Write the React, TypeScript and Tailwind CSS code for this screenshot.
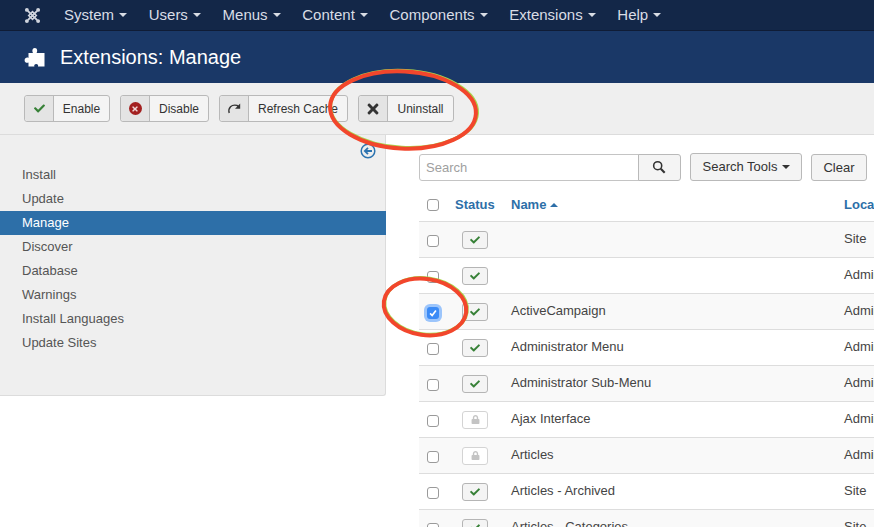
import React from 'react';
import { FaCheck, FaLock, FaTimes } from 'react-icons/fa';

const menus = ['System', 'Users', 'Menus', 'Content', 'Components', 'Extensions', 'Help'];
const sideLinks = ['Install', 'Update', 'Manage', 'Discover', 'Database', 'Warnings', 'Install Languages', 'Update Sites'];

const rows = [
  { name: '', loc: 'Site', status: 'ok' },
  { name: '', loc: 'Administrator', status: 'ok' },
  { name: 'ActiveCampaign', loc: 'Administrator', status: 'ok', checked: true },
  { name: 'Administrator Menu', loc: 'Administrator', status: 'ok' },
  { name: 'Administrator Sub-Menu', loc: 'Administrator', status: 'ok' },
  { name: 'Ajax Interface', loc: 'Administrator', status: 'lock' },
  { name: 'Articles', loc: 'Administrator', status: 'lock' },
  { name: 'Articles - Archived', loc: 'Site', status: 'ok' },
  { name: 'Articles - Categories', loc: 'Site', status: 'ok' },
];

const Caret = () => (
  <span className="ml-[5px] inline-block w-0 h-0 border-x-[4px] border-x-transparent border-t-[4px] border-t-current align-middle" />
);

const JoomlaLogo = () => (
  <svg viewBox="0 0 20 20" className="w-[17px] h-[17px]" fill="none" stroke="#cfd4dd">
    <path d="M4.5 4.5 L15.5 15.5 M15.5 4.5 L4.5 15.5" strokeWidth="2.2" />
    <path d="M5.5 10 L10 5.5 L14.5 10 L10 14.5 Z" strokeWidth="1.8" />
    <circle cx="3.4" cy="3.4" r="2.3" fill="#cfd4dd" stroke="none" />
    <circle cx="16.6" cy="3.4" r="2.3" fill="#cfd4dd" stroke="none" />
    <circle cx="3.4" cy="16.6" r="2.3" fill="#cfd4dd" stroke="none" />
    <circle cx="16.6" cy="16.6" r="2.3" fill="#cfd4dd" stroke="none" />
  </svg>
);

const PuzzleIcon = () => (
  <svg viewBox="0 0 22 20" className="w-[22px] h-[20px]" fill="#ffffff">
    <path d="M4.5 6 H9 C8 4.5 8 1 10.8 1 C13.6 1 13.6 4.5 12.6 6 H20.5 V19.5 H14 C14.6 18 13.6 17 12.2 17 C10.8 17 9.8 18 10.4 19.5 H4.5 V15.5 C3 16.3 0.6 15.5 0.6 13.2 C0.6 10.9 3 10.1 4.5 10.9 Z" />
  </svg>
);

const ToolButton = ({ icon, label, width }: { icon: React.ReactNode; label: string; width: string }) => (
  <button className={`flex h-[27px] items-center rounded-[3px] border border-[#b9b9b9] bg-[#f4f4f4] text-[12px] text-[#333] ${width}`}>
    <span className="flex h-full w-[29px] shrink-0 items-center justify-center rounded-l-[3px] border-r border-[#b9b9b9] bg-[#e4e4e4]">
      {icon}
    </span>
    <span className="flex-1 text-center whitespace-nowrap">{label}</span>
  </button>
);

const CheckBox = ({ checked }: { checked?: boolean }) =>
  checked ? (
    <span className="flex h-[12px] w-[12px] items-center justify-center rounded-[3px] bg-[#3b8bf6] shadow-[0_0_0_3px_#9cc5fb]">
      <svg viewBox="0 0 12 12" className="h-[10px] w-[10px]" fill="none" stroke="#fff" strokeWidth="2">
        <path d="M2.5 6.5 L5 9 L9.5 3" />
      </svg>
    </span>
  ) : (
    <span className="block h-[12px] w-[12px] rounded-[3px] border border-[#9a9a9a] bg-white" />
  );

const StatusButton = ({ status }: { status: string }) =>
  status === 'ok' ? (
    <span className="flex h-[18px] w-[26px] items-center justify-center rounded-[3px] border border-[#b5b5b5] bg-[#f4f4f4]">
      <FaCheck className="text-[10px] text-[#378137]" />
    </span>
  ) : (
    <span className="flex h-[18px] w-[26px] items-center justify-center rounded-[3px] border border-[#d4d4d4] bg-white">
      <FaLock className="text-[9px] text-[#c4c4c4]" />
    </span>
  );

export default function App() {
  return (
    <div className="relative h-[527px] w-[874px] overflow-hidden bg-white font-['Liberation_Sans',Arial,sans-serif] text-[13px] text-[#333]">
      {/* Navbar */}
      <div className="flex h-[31px] items-center border-b border-[#0f1c36] bg-[#132748] pl-[24px]">
        <JoomlaLogo />
        <div className="ml-[23px] flex gap-[21.7px] text-[15px] text-[#d9dde5]">
          {menus.map((m) => (
            <span key={m} className="flex items-center whitespace-nowrap">
              {m}
              <Caret />
            </span>
          ))}
        </div>
      </div>

      {/* Title */}
      <div className="flex h-[52px] items-center bg-[#1a3867] pl-[24px] text-white">
        <PuzzleIcon />
        <h1 className="ml-[14px] text-[20px] font-normal">Extensions: Manage</h1>
      </div>

      {/* Toolbar */}
      <div className="flex h-[52px] items-center gap-[10px] border-b border-[#dcdcdc] bg-[#efefef] pl-[24px]">
        <ToolButton width="w-[86px]" label="Enable" icon={<FaCheck className="text-[11px] text-[#378137]" />} />
        <ToolButton
          width="w-[89px]"
          label="Disable"
          icon={
            <span className="flex h-[13px] w-[13px] items-center justify-center rounded-full bg-[#a32020]">
              <FaTimes className="text-[8px] text-[#f0d8d8]" />
            </span>
          }
        />
        <ToolButton
          width="w-[129px]"
          label="Refresh Cache"
          icon={
            <svg viewBox="0 0 14 14" className="h-[14px] w-[14px]" fill="none" stroke="#333" strokeWidth="1.4">
              <path d="M2.2 11 C0.8 6 4.5 2 10 3.4 L11.5 4.6" />
              <path d="M13.2 1.6 V6.8 H8 Z" fill="#333" stroke="none" />
            </svg>
          }
        />
        <ToolButton width="w-[96px]" label="Uninstall" icon={<FaTimes className="text-[16px] text-[#333]" />} />
      </div>

      <div className="flex">
        {/* Sidebar */}
        <aside className="relative h-[261px] w-[386px] shrink-0 rounded-br-[3px] border-r border-b border-[#dcdcdc] bg-[#efefef] pt-[28px]">
          <svg viewBox="0 0 16 16" className="absolute right-[9px] top-[8px] h-[16px] w-[16px]" fill="none" stroke="#2d74b0" strokeWidth="1.5">
            <circle cx="8" cy="8" r="6.8" />
            <path d="M12 8 H5 M8 4.8 L4.8 8 L8 11.2" strokeWidth="1.8" />
          </svg>
          {sideLinks.map((l) => (
            <div
              key={l}
              className={`flex h-[24px] items-center pl-[22px] ${l === 'Manage' ? '-mr-px bg-[#2d6fa8] text-white' : 'text-[#555]'}`}
            >
              {l}
            </div>
          ))}
        </aside>

        {/* Content */}
        <main className="min-w-0 flex-1 pl-[33px] pt-[19px]">
          <div className="flex w-[600px] items-start">
            <div className="flex h-[27px] w-[220px] items-center rounded-l-[3px] border border-[#c4c4c4] bg-white pl-[6px] text-[#a0a0a0]">
              Search
            </div>
            <button className="-ml-px flex h-[27px] w-[43px] items-center justify-center rounded-r-[3px] border border-[#b9b9b9] bg-[#f4f4f4] pr-[2px] pb-[2px]">
              <svg viewBox="0 0 16 16" className="h-[14px] w-[14px]" fill="none" stroke="#333" strokeWidth="1.8">
                <circle cx="6.5" cy="6.5" r="4.6" />
                <path d="M10 10 L14.5 14.5" strokeWidth="2.4" />
              </svg>
            </button>
            <button className="-mt-px ml-[9px] flex h-[28px] w-[112px] items-center justify-center rounded-[3px] border border-[#b9b9b9] bg-[#f4f4f4] pl-[1px] text-[#333]">
              Search Tools
              <Caret />
            </button>
            <button className="ml-[9px] flex h-[27px] w-[56px] items-center justify-center rounded-[3px] border border-[#b9b9b9] bg-[#f4f4f4] text-[#333]">
              Clear
            </button>
          </div>

          {/* Table */}
          <div className="mt-[5px] w-[600px]">
            <div className="flex h-[36px] items-center border-b border-[#ddd] pt-[2px] font-bold text-[#2d6fa8]">
              <span className="flex w-[28px] shrink-0 justify-center pt-[1px]">
                <CheckBox />
              </span>
              <span className="w-[64px] shrink-0 pl-[8px]">Status</span>
              <span className="flex w-[333px] shrink-0 items-center">
                Name
                <span className="ml-[4px] inline-block h-0 w-0 border-x-[4px] border-b-[4px] border-x-transparent border-b-current" />
              </span>
              <span>Location</span>
            </div>
            {rows.map((r, i) => (
              <div
                key={i}
                className={`flex h-[36px] items-center border-b border-[#ddd] ${i % 2 === 0 ? 'bg-[#f9f9f9]' : 'bg-white'}`}
              >
                <span className="flex w-[28px] shrink-0 justify-center pt-[2px]">
                  <CheckBox checked={r.checked} />
                </span>
                <span className="flex w-[64px] shrink-0 pl-[15px]">
                  <StatusButton status={r.status} />
                </span>
                <span className="w-[333px] shrink-0 pb-[2px] text-[#444]">{r.name}</span>
                <span className="pb-[2px] whitespace-nowrap text-[#444]">{r.loc}</span>
              </div>
            ))}
          </div>
        </main>
      </div>

      {/* Hand-drawn annotations over the screenshot */}
      <svg className="pointer-events-none absolute inset-0" width="874" height="527" fill="none">
        <ellipse cx="403.8" cy="109.2" rx="73.5" ry="38.5" transform="rotate(3 403.8 109.2)" stroke="#a8d84e" strokeWidth="3.6" />
        <ellipse cx="403" cy="110" rx="73" ry="38.5" transform="rotate(3 403 110)" stroke="#f2462c" strokeWidth="4" />
        <ellipse cx="425.8" cy="306.2" rx="41.5" ry="28" transform="rotate(8 425.8 306.2)" stroke="#a8d84e" strokeWidth="3.6" />
        <ellipse cx="425" cy="307" rx="41.5" ry="28" transform="rotate(8 425 307)" stroke="#f2462c" strokeWidth="4" />
      </svg>
    </div>
  );
}
